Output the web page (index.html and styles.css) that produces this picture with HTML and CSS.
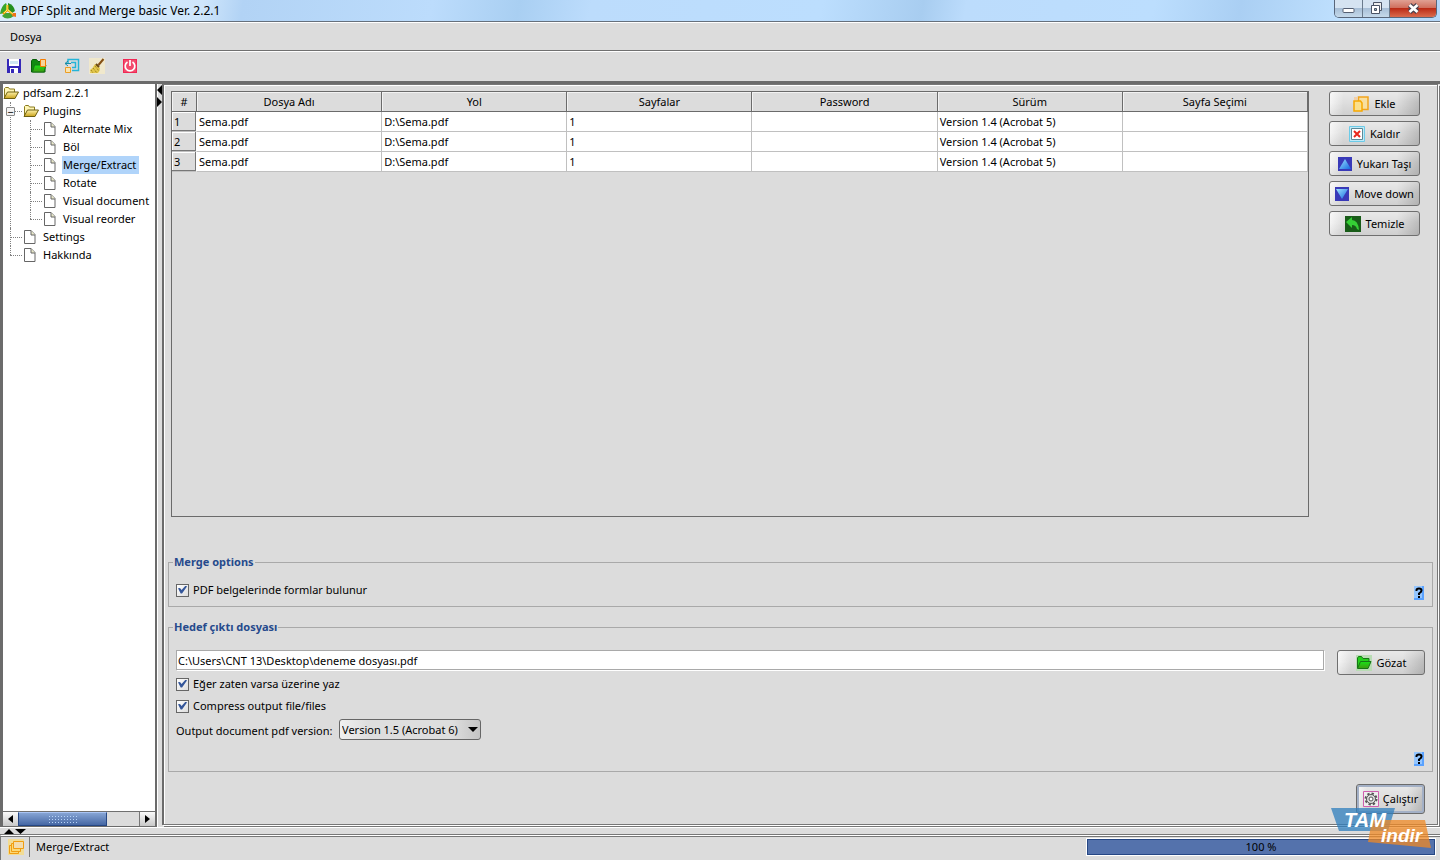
FILE: index.html
```html
<!DOCTYPE html>
<html lang="tr">
<head>
<meta charset="utf-8">
<title>PDF Split and Merge basic Ver. 2.2.1</title>
<link rel="stylesheet" href="styles.css">
</head>
<body>
<svg class="defs" aria-hidden="true">
  <defs>
    <linearGradient id="gold" x2="0" y2="1"><stop offset="0" stop-color="#fff3a8"/><stop offset="1" stop-color="#c9a21c"/></linearGradient>
    <linearGradient id="blue" x2="1" y2="1"><stop offset="0" stop-color="#9fe4ff"/><stop offset="1" stop-color="#1467e0"/></linearGradient>
    <linearGradient id="green" x2="0" y2="1"><stop offset="0" stop-color="#19e219"/><stop offset="1" stop-color="#3f9a10"/></linearGradient>
  </defs>
  <symbol id="folder" viewBox="0 0 16 14">
    <path d="M1.5 12V2.5l1-1h3l1 1.5h5V6" fill="#fff6b5" stroke="#8a7a1e"/>
    <path d="M1 12.5 4.5 6H15.5L12 12.5Z" fill="url(#gold)" stroke="#6d5f10"/>
  </symbol>
  <symbol id="page" viewBox="0 0 12 15">
    <path d="M.5.5h6.500l4 4v9H.5Z" fill="#fff" stroke="#666"/>
    <path d="M7 .5V5h4" fill="#e8e8c8" stroke="#666"/>
  </symbol>
  <symbol id="help" viewBox="0 0 10 14">
    <path d="M0 0h10v14H0z" fill="#5aa2ff"/><path d="M0 0h8v12H0z" fill="#94c6ff"/>
    <path d="M2.500 5V4q0-1.500 2.500-1.500T7.500 4.500Q7.500 6 5 7.500V9" fill="none" stroke="#000" stroke-width="2"/><path d="M4 10h2v2H4z"/>
  </symbol>
</svg>

<header class="titlebar">
  <svg class="logo" width="16" height="17" viewBox="0 0 16 17" aria-hidden="true">
    <path d="M6 1Q1 4 0 12L5 11 8 6Z" fill="#36a52c"/><path d="M8 1q6 2 7 8l-3 2L8 7Z" fill="#249020"/><path d="M2 14q5 5 12 0l-2-3H5Z" fill="#42a437"/>
    <path d="M7.500 3v5L3 12M7.500 8 14 13" fill="none" stroke="#f5a000" stroke-width="2"/><path d="M7 3v5l-3 3M8 8l5 4" fill="none" stroke="#fff26a"/><path d="M13 11h3v4l-4-1z" fill="#ed7418"/>
  </svg>
  <h1 class="title">PDF Split and Merge basic Ver. 2.2.1</h1>
  <div class="window-buttons">
    <button class="win" aria-label="Minimize"><svg width="13" height="13" viewBox="0 0 13 13"><rect x="1" y="6.500" width="11" height="4" rx="1" fill="#fff" stroke="#555f72"/></svg></button>
    <button class="win win-max" aria-label="Restore"><svg width="13" height="13" viewBox="0 0 13 13"><path d="M3.500 3V.5h8v8H9.500" fill="#eee" stroke="#4a5365"/><path d="M1.500 3.500h8v8h-8z" fill="#fff" stroke="#4a5365"/><path d="M4.500 6.500h2v2h-2z" fill="#9bb" stroke="#4a5365"/></svg></button>
    <button class="win win-close" aria-label="Close"><svg width="13" height="13" viewBox="0 0 13 13"><path d="m2.500 3 8 7m0-7-8 7" stroke="#4b4350" stroke-width="5"/><path d="m2.500 3 8 7m0-7-8 7" stroke="#fff" stroke-width="2.800"/></svg></button>
  </div>
</header>

<nav class="menubar"><button class="menu">Dosya</button></nav>

<div class="toolbar">
  <button class="tool" aria-label="Save"><svg width="16" height="16" viewBox="0 0 16 16"><path d="M1 1h14v14H1z" fill="#3528b8"/><path d="M3 1h10v7H3z" fill="#fff"/><path d="M4 3h8v3H4z" fill="#cfe6f2"/><path d="M4 10h8v5H4z" fill="#fff"/><path d="M5 11h3v4H5z" fill="#3528b8"/></svg></button>
  <button class="tool" aria-label="Open"><svg width="16" height="16" viewBox="0 0 16 16"><path d="M.5 14V3l1-1.500h4L7 3.500h7V14Z" fill="#118a11" stroke="#075e07"/><path d="m1.500 14 2-7H15l-2 7Z" fill="url(#green)" stroke="#167516"/><path d="M9.500 1.500h5v7h-5z" fill="#f6d49a" stroke="#f57c00"/></svg></button>
  <button class="tool tool-group" aria-label="Log"><svg width="16" height="16" viewBox="0 0 16 16"><path d="M4 6V1.500h10.500v11H8M7 4.500h4.500v5H8" fill="none" stroke="#24b4d8" stroke-width="1.500"/><path d="M1 5.500h6M4 3 1 5.500 4 8" fill="none" stroke="#168ca8"/><path d="M1.500 9.500h5v5h-5z" fill="#f9e3b0" stroke="#ec9e24"/></svg></button>
  <button class="tool" aria-label="Clear"><svg width="16" height="16" viewBox="0 0 16 16"><path d="M0 0h16v16H0z" fill="#f0e8cc"/><path d="M14.500 1 9.500 7" stroke="#855014" stroke-width="2"/><path d="m6 6 5 4q0 3-2 5H1q1-2 0-3 3-2 5-6Z" fill="#e2c64a"/><path d="m2 12 2 3m0-5 4 5M6 8l4 5" stroke="#8d7418" stroke-dasharray="1 1"/><path d="m7 6 3 3" stroke="#6b4910" stroke-width="2"/></svg></button>
  <button class="tool tool-group" aria-label="Exit"><svg width="16" height="16" viewBox="0 0 16 16"><path d="M1 1h14v14H1z" fill="#f02854"/><path d="M2 2h12v12H2z" fill="#f34a6c"/><path d="M5.500 4a4.800 4.800 0 1 0 5 0M8 2v6" fill="none" stroke="#fff" stroke-width="1.700"/></svg></button>
</div>

<div class="workspace">
  <aside class="sidebar">
    <ul class="tree">
      <li class="root"><span class="node"><svg class="ico-folder"><use href="#folder"/></svg>pdfsam 2.2.1</span>
        <ul class="level">
          <li><span class="toggle">−</span><span class="node"><svg class="ico-folder"><use href="#folder"/></svg>Plugins</span>
            <ul class="level">
              <li><span class="node"><svg class="ico-page"><use href="#page"/></svg>Alternate Mix</span></li>
              <li><span class="node"><svg class="ico-page"><use href="#page"/></svg>Böl</span></li>
              <li><span class="node"><svg class="ico-page"><use href="#page"/></svg><span class="selected">Merge/Extract</span></span></li>
              <li><span class="node"><svg class="ico-page"><use href="#page"/></svg>Rotate</span></li>
              <li><span class="node"><svg class="ico-page"><use href="#page"/></svg>Visual document</span></li>
              <li><span class="node"><svg class="ico-page"><use href="#page"/></svg>Visual reorder</span></li>
            </ul>
          </li>
          <li><span class="node"><svg class="ico-page"><use href="#page"/></svg>Settings</span></li>
          <li><span class="node"><svg class="ico-page"><use href="#page"/></svg>Hakkında</span></li>
        </ul>
      </li>
    </ul>
    <div class="scrollbar">
      <button class="scroll-btn" aria-label="Scroll left"><svg width="5" height="8" viewBox="0 0 5 8"><path d="M5 0v8L0 4z"/></svg></button>
      <div class="track"><div class="thumb"><span class="grip"></span></div></div>
      <button class="scroll-btn" aria-label="Scroll right"><svg width="5" height="8" viewBox="0 0 5 8"><path d="M0 0v8l5-4z"/></svg></button>
    </div>
  </aside>
  <div class="divider">
    <svg width="5" height="26" viewBox="0 0 5 26"><path d="M5 1v10L0 6zM0 13v10l5-5z"/></svg>
  </div>
  <main class="content">
    <section class="files">
      <div class="table-box">
        <table class="table">
          <colgroup><col class="col-num"><col><col><col><col><col><col></colgroup>
          <thead><tr><th>#</th><th>Dosya Adı</th><th>Yol</th><th>Sayfalar</th><th>Password</th><th>Sürüm</th><th>Sayfa Seçimi</th></tr></thead>
          <tbody>
            <tr><td class="num">1</td><td>Sema.pdf</td><td>D:\Sema.pdf</td><td>1</td><td></td><td>Version 1.4 (Acrobat 5)</td><td></td></tr>
            <tr><td class="num">2</td><td>Sema.pdf</td><td>D:\Sema.pdf</td><td>1</td><td></td><td>Version 1.4 (Acrobat 5)</td><td></td></tr>
            <tr><td class="num">3</td><td>Sema.pdf</td><td>D:\Sema.pdf</td><td>1</td><td></td><td>Version 1.4 (Acrobat 5)</td><td></td></tr>
          </tbody>
        </table>
      </div>
      <div class="actions">
        <button class="btn"><svg width="16" height="16" viewBox="0 0 16 16"><path d="M5.500 1H15v12.500H5.500Z" fill="#f8dfa0" stroke="#f2a41c" stroke-width="1.500"/><path d="M1 5h6.500l1.500 2v8H1Z" fill="#fbe08c" stroke="#f7a800" stroke-width="1.500"/><path d="M1 1h3v3H1z" fill="#f2cfa8"/></svg>Ekle</button>
        <button class="btn"><svg width="16" height="16" viewBox="0 0 16 16"><path d="M.5.5h15v15H.5z" fill="#bfe9f7" stroke="#6ccbe8"/><path d="M2.500 2.500h11v11h-11z" fill="#fff" stroke="#5d8896"/><path d="m5 5 6 6m0-6-6 6" stroke="#e8281c" stroke-width="2"/></svg>Kaldır</button>
        <button class="btn"><svg width="14" height="14" viewBox="0 0 14 14"><path d="M0 0h14v14H0z" fill="#3939b8"/><path d="M7 2 13 12H1Z" fill="url(#blue)"/></svg>Yukarı Taşı</button>
        <button class="btn"><svg width="14" height="14" viewBox="0 0 14 14"><path d="M0 0h14v14H0z" fill="#3939b8"/><path d="M1 2h12L7 12Z" fill="url(#blue)"/></svg>Move down</button>
        <button class="btn"><svg width="16" height="16" viewBox="0 0 16 16"><path d="M0 0h16v16H0z" fill="#185c18"/><path d="M1 6 7 1v3q6 0 7 10l-2-1q-1-4-5-4v3Z" fill="#35cf35"/></svg>Temizle</button>
      </div>
    </section>

    <fieldset class="group">
      <legend>Merge options</legend>
      <div class="group-body">
        <label class="check"><input type="checkbox" checked>PDF belgelerinde formlar bulunur</label>
        <svg class="help" role="img" aria-label="Help"><use href="#help"/></svg>
      </div>
    </fieldset>

    <fieldset class="group group-output">
      <legend>Hedef çıktı dosyası</legend>
      <div class="path-row">
        <input class="path" type="text" aria-label="Hedef çıktı dosyası" value="C:\Users\CNT 13\Desktop\deneme dosyası.pdf">
        <button class="btn browse"><svg width="16" height="16" viewBox="0 0 16 16"><path d="M0 0h16v16H0z" fill="#b9dcb4"/><path d="M1.500 13V3l1-1.500h3L7 3.500h6V6" fill="#25cf1c" stroke="#167516"/><path d="m1.500 13.500 3-7H15l-3 7Z" fill="url(#green)" stroke="#167516"/></svg>Gözat</button>
      </div>
      <label class="check"><input type="checkbox" checked>Eğer zaten varsa üzerine yaz</label>
      <label class="check"><input type="checkbox" checked>Compress output file/files</label>
      <div class="version-row">
        <label for="version">Output document pdf version:</label>
        <span class="select-box"><select id="version"><option>Version 1.5 (Acrobat 6)</option></select></span>
      </div>
      <div class="help-row"><svg class="help" role="img" aria-label="Help"><use href="#help"/></svg></div>
    </fieldset>

    <div class="run-row">
      <button class="btn run"><svg width="16" height="16" viewBox="0 0 16 16"><path d="M.5.5h15v15H.5z" fill="#eee" stroke="#cf5fae"/><circle cx="8" cy="8" r="5.500" fill="none" stroke="#555" stroke-width="2" stroke-dasharray="2.300 2"/><circle cx="8" cy="8" r="4.500" fill="#ddd" stroke="#555"/><circle cx="8" cy="8" r="2" fill="#fff" stroke="#555"/></svg>Çalıştır</button>
    </div>
  </main>
</div>

<div class="log-divider"><svg width="22" height="5" viewBox="0 0 22 5"><path d="M0 5h10L5 0zM11 0h11l-5.500 5z"/></svg></div>

<footer class="status">
  <div class="status-icon"><svg width="16" height="16" viewBox="0 0 16 16"><path d="M0 0h16v16H0z" fill="#f2dc94"/><g fill="#fbd976" stroke="#f09c10"><path d="M1.500 6.500h9v8h-9z"/><path d="M3.500 4.500h9v8h-9z"/><path d="M5.500 2.500h10v7h-10z" fill="#f3dcae"/></g></svg></div>
  <div class="status-text">Merge/Extract</div>
  <div class="progress" role="progressbar" aria-valuenow="100">100 %</div>
</footer>

<svg class="watermark" width="102" height="44" viewBox="0 0 102 44">
  <path d="M0 1h64l-7 23H8Z" fill="#2f7fbd" opacity=".75"/>
  <path d="M41 13h53l6 28-63-6Z" fill="#f08a24" opacity=".75"/>
  <text class="mark mark-top" x="13" y="20">TAM</text>
  <text class="mark mark-low" x="50" y="35">indir</text>
</svg>
</body>
</html>
```
FILE: styles.css
```css
* { box-sizing: border-box; }

body {
  margin: 0;
  height: 100vh;
  display: flex;
  flex-direction: column;
  overflow: hidden;
  position: relative;
  background: #dcdcdc;
  color: #000;
  font: 11px/18px "Noto Sans", "Open Sans", sans-serif;
}

button, input, select { font: inherit; color: inherit; }
button { border: 0; background: none; padding: 0; }
ul { list-style: none; margin: 0; padding: 0; }
svg { display: block; flex: none; }
.defs { position: absolute; width: 0; height: 0; }

.titlebar {
  flex: none;
  display: flex;
  align-items: center;
  height: 22px;
  border-bottom: 1px solid #66707c;
  background: linear-gradient(100deg, #d9ecfb 0, #cfe6fb 200px, #b2d3f5 240px, #bcdcfc 30%, #a9cff2 36%, #bcdcfc 41%, #bcdefe 57%, #a8cdf0 64%, #bcdcfc 67%, #bcdefe 80%, #aacff3 86%, #bfe0fe 93%, #b5d7f8 100%);
}
.title { flex: 1; margin: 0 0 0 5px; font-size: 12px; font-weight: 400; }
.window-buttons {
  display: flex;
  align-self: flex-start;
  height: 18px;
  margin-right: 3px;
  border: 1px solid #58667a;
  border-top: 0;
  border-radius: 0 0 5px 5px;
  overflow: hidden;
}
.win {
  display: flex;
  align-items: center;
  justify-content: center;
  width: 28px;
  background: linear-gradient(#d5e3f1 0 45%, #a8bfd7 50%, #c5d9ea);
  border-right: 1px solid #6a7a8c;
}
.win-max { width: 27px; }
.win-close { width: 46px; border: 0; background: linear-gradient(#e0a193 0, #d0705e 45%, #bb2c16 50%, #da6b4e); }

.menubar {
  flex: none;
  display: flex;
  align-items: center;
  height: 29px;
  padding-left: 9px;
  border-top: 1px solid #fff;
  border-bottom: 1px solid #707070;
}
.menu { padding: 0 1px; }

.toolbar {
  flex: none;
  display: flex;
  align-items: center;
  height: 33px;
  padding: 0 0 2px 6px;
  gap: 9px;
  border-top: 1px solid #fff;
  border-bottom: 3px solid #6b6b6b;
}
.tool-group { margin-left: 8px; }

.workspace { flex: 1; display: flex; min-height: 0; }

.sidebar {
  flex: none;
  display: flex;
  flex-direction: column;
  width: 157px;
  border-left: 3px solid #6b6b6b;
  border-right: 2px solid #6b6b6b;
  border-bottom: 1px solid #6b6b6b;
  background: #fff;
}
.tree { flex: 1; overflow: hidden; }
.level { padding-left: 20px; }
.level li { position: relative; }
.level > li::before {
  content: "";
  position: absolute;
  left: -13px;
  top: 9px;
  width: 12px;
  border-top: 1px dotted #808080;
}
.level > li::after {
  content: "";
  position: absolute;
  left: -13px;
  top: 0;
  height: 100%;
  border-left: 1px dotted #808080;
}
.level > li:last-child::after { height: 9px; }
.node { display: flex; align-items: center; height: 18px; gap: 4px; white-space: nowrap; }
.ico-folder { width: 16px; height: 14px; }
.ico-page { width: 12px; height: 15px; margin: 0 3px 0 1px; }
.selected { background: #b0d4fa; margin: 0 -3px 0 -1px; padding: 0 3px 0 1px; }
.toggle {
  position: absolute;
  z-index: 1;
  left: -17px;
  top: 5px;
  width: 9px;
  height: 9px;
  border: 1px solid #888;
  border-radius: 1px;
  background: #f4f4f4;
  text-align: center;
  line-height: 7px;
}

.scrollbar { flex: none; display: flex; height: 15px; border-top: 1px solid #707070; }
.scroll-btn { display: flex; align-items: center; justify-content: center; width: 15px; background: linear-gradient(#fafafa, #c8c8c8); }
.track { flex: 1; display: flex; background: #dcdcdc; border-right: 1px solid #777; }
.thumb {
  width: 89px;
  display: flex;
  align-items: center;
  justify-content: center;
  border: 1px solid #264784;
  border-top-color: #a9c4f4;
  background: linear-gradient(#86a4d4, #4567a4);
}
.grip { width: 30px; height: 9px; background: radial-gradient(#b8d4f8 25%, transparent 30%) 0 0 / 3px 3px; }

.divider { flex: none; width: 5px; background: #dcdcdc; border-left: 1px solid #fff; }
.divider svg { margin-left: -1px; }

.content {
  flex: 1;
  min-width: 0;
  display: flex;
  flex-direction: column;
  margin: 0 2px 2px 0;
  padding: 6px 4px 10px 4px;
  border: 1px solid #777;
  border-left: 2px solid #6b6b6b;
  box-shadow: inset 1px 1px #fff, 1px 1px #fff, 2px 2px #777;
}

.files { flex: 1; display: flex; gap: 20px; padding: 0 13px 0 3px; margin-bottom: 37px; min-height: 0; }
.table-box { flex: 1; border: 1px solid #6b6b6b; min-width: 0; }
.table { width: 100%; table-layout: fixed; border-collapse: separate; border-spacing: 0; }
.col-num { width: 25px; }
.table th {
  height: 20px;
  padding: 1px 0 0;
  font-weight: 400;
  line-height: 18px;
  border-right: 1px solid #6b6b6b;
  border-bottom: 1px solid #6b6b6b;
  box-shadow: inset 1px 1px #f2f2f2;
}
.table td {
  height: 20px;
  padding: 0 2px;
  line-height: 18px;
  background: #fff;
  border-right: 1px solid #c0c0c0;
  border-bottom: 1px solid #c0c0c0;
  white-space: nowrap;
}
.table .num { background: #dcdcdc; box-shadow: inset -1px -1px #777, inset 1px 1px #fff; border-color: #fff #fff #c0c0c0; }

.actions { flex: none; display: flex; flex-direction: column; gap: 5px; width: 91px; }
.btn {
  display: flex;
  align-items: center;
  justify-content: center;
  gap: 5px;
  height: 25px;
  border: 1px solid #6f6f6f;
  border-radius: 3px;
  background: linear-gradient(#fff5, #0000 45%, #0001), linear-gradient(90deg, #f5f5f5, #dedede 15% 75%, #bcbcbc);
  white-space: nowrap;
}

.group { margin: 0; border: 1px solid #a9a9a9; padding: 0 8px 0 7px; min-width: 0; }
.group legend { padding: 0 1px; margin-left: -3px; line-height: 16px; font-weight: 700; color: #264a8c; }
.group-body { display: flex; justify-content: space-between; height: 36px; padding-top: 11px; }
.group-body .help { margin-top: 5px; }
.help { width: 10px; height: 14px; }
.check { display: flex; align-items: center; gap: 4px; height: 18px; margin-bottom: 4px; }
.check input {
  appearance: none;
  width: 13px;
  height: 13px;
  margin: 0;
  border: 1px solid #666;
  background: linear-gradient(135deg, #fff, #ddd);
}
.check input:checked::before {
  content: "";
  display: block;
  width: 9px;
  height: 8px;
  margin: 1px;
  background: #34569a;
  clip-path: polygon(0 35%, 22% 30%, 40% 55%, 85% 0, 100% 12%, 45% 100%, 30% 100%);
}
.group-output { margin-top: 12px; }
.path-row { display: flex; align-items: flex-start; gap: 13px; padding-top: 15px; }
.path {
  flex: 1;
  min-width: 0;
  height: 20px;
  padding: 0 1px;
  border: 1px solid #a9a9a9;
  box-shadow: 1px 1px #fff;
  background: #fff;
}
.browse { width: 88px; margin-right: -1px; }
.version-row { display: flex; align-items: flex-start; gap: 2px; }
.version-row label { padding-top: 3px; width: 161px; white-space: nowrap; }
.select-box { position: relative; }
.select-box select {
  appearance: none;
  display: block;
  width: 142px;
  height: 21px;
  padding: 0 2px;
  border: 1px solid #666;
  border-radius: 3px;
  background: linear-gradient(90deg, #f0f0f0, #dedede 20% 80%, #c4c4c4);
}
.select-box::after {
  content: "";
  position: absolute;
  right: 3px;
  top: 8px;
  border: 5px solid transparent;
  border-top-color: #000;
  border-bottom: 0;
  pointer-events: none;
}
.help-row { display: flex; justify-content: flex-end; padding: 12px 0 5px; }

.run-row { display: flex; justify-content: flex-end; padding: 12px 8px 0; }
.run { width: 69px; height: 30px; border-color: #6b6b6b; box-shadow: inset 0 0 0 2px #a3b0c6; gap: 4px; }

.log-divider { flex: none; height: 8px; padding-top: 1px; padding-left: 4px; border-top: 1px solid #fff; border-bottom: 1px solid #777; }

.status {
  flex: none;
  display: flex;
  align-items: center;
  height: 25px;
  padding-bottom: 2px;
  border-top: 1px solid #fff;
  border-left: 1px solid #777;
  box-shadow: inset 0 1px #777;
}
.status-icon { padding: 0 5px 0 7px; border-right: 1px solid #777; height: 20px; display: flex; align-items: center; }
.status-text { flex: 1; padding-left: 6px; }
.progress {
  width: 348px;
  height: 16px;
  margin-right: 5px;
  border: 1px solid #264784;
  background: #5472ac;
  box-shadow: 0 0 0 1px #fff;
  text-align: center;
  line-height: 14px;
}

.watermark { position: absolute; right: 7px; bottom: 9px; }
.mark { fill: #fff; font-style: italic; font-weight: 700; font-family: "Liberation Sans", sans-serif; }
.mark-top { font-size: 20px; }
.mark-low { font-size: 19px; }
```
